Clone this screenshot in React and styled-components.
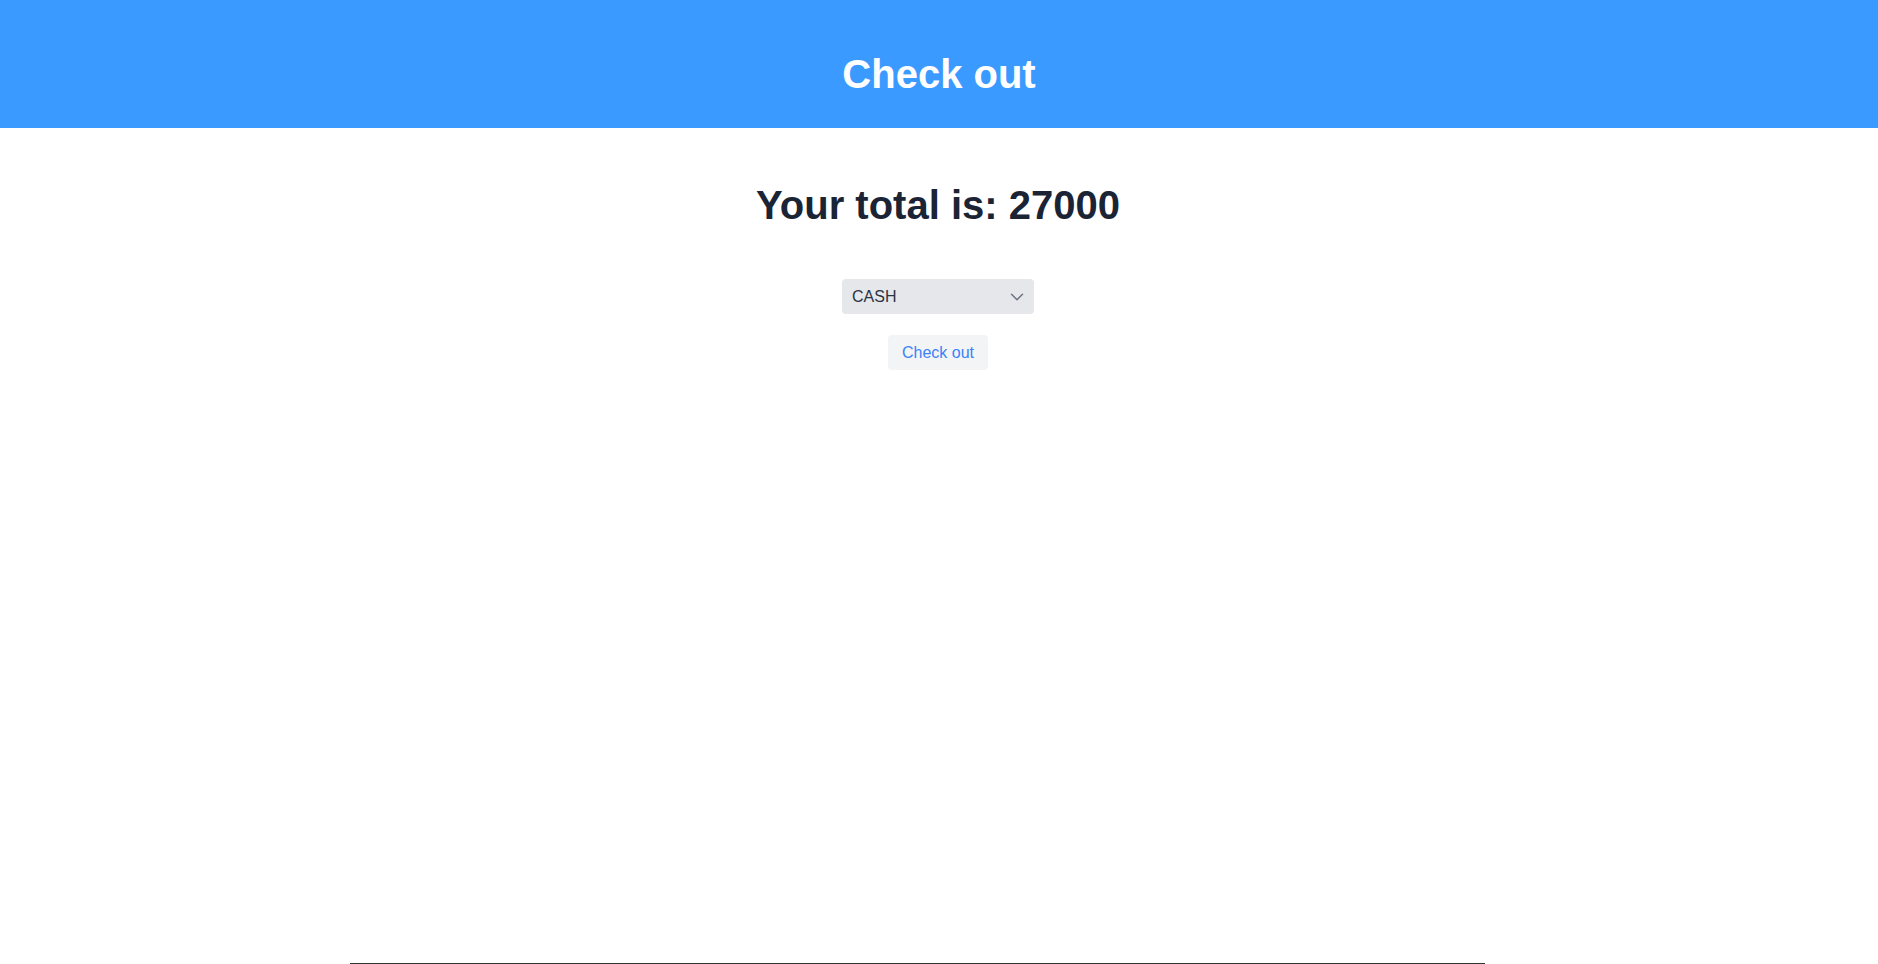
import React, { useState } from 'react';
import styled, { createGlobalStyle } from 'styled-components';
import { ChevronDown } from 'lucide-react';

const GlobalStyle = createGlobalStyle`
	html, body {
		margin: 0;
		padding: 0;
		background: #ffffff;
		font-family: 'Liberation Sans', Arial, sans-serif;
		overflow: hidden;
	}
`;

const App = () => {
	const [method, setMethod] = useState('CASH');
	return (
		<Page>
			<GlobalStyle />
			<Header>
				<HeaderTitle>Check out</HeaderTitle>
			</Header>
			<Main>
				<Total>Your total is: 27000</Total>
				<SelectWrap>
					<Select value={method} onChange={(e) => setMethod(e.target.value)}>
						<option value="CASH">CASH</option>
						<option value="CARD">CARD</option>
					</Select>
					<Chevron>
						<ChevronDown size={22} strokeWidth={1.6} />
					</Chevron>
				</SelectWrap>
				<CheckoutButton type="button">Check out</CheckoutButton>
			</Main>
			<Footer>
				<FooterRule />
			</Footer>
		</Page>
	);
};

export default App;

const Page = styled.div`
	display: flex;
	flex-direction: column;
	width: 100%;
`;

const Header = styled.header`
	height: 128px;
	box-sizing: border-box;
	padding-top: 50px;
	background: #3b9aff;
	display: flex;
	justify-content: center;
`;

const HeaderTitle = styled.h1`
	margin: 0;
	font-size: 40px;
	line-height: 48px;
	font-weight: 700;
	color: #ffffff;
`;

const Main = styled.main`
	height: 835px;
	display: flex;
	flex-direction: column;
	align-items: center;
	padding: 53px 2px 0 0;
	box-sizing: border-box;
`;

const Total = styled.h2`
	margin: 0 0 50px;
	font-size: 40px;
	line-height: 48px;
	font-weight: 700;
	color: #1b2434;
`;

const SelectWrap = styled.div`
	position: relative;
	width: 192px;
	height: 35px;
	margin-bottom: 21px;
`;

const Select = styled.select`
	appearance: none;
	width: 100%;
	height: 100%;
	border: none;
	border-radius: 4px;
	background: #e5e7eb;
	padding: 0 32px 0 10px;
	font-family: 'Liberation Sans', Arial, sans-serif;
	font-size: 16px;
	color: #2a3342;
	outline: none;
`;

const Chevron = styled.span`
	position: absolute;
	right: 6px;
	top: 50%;
	transform: translateY(-50%);
	display: flex;
	color: #6b7280;
	pointer-events: none;
`;

const CheckoutButton = styled.button`
	width: 100px;
	height: 35px;
	border: none;
	border-radius: 4px;
	background: #f3f4f6;
	color: #3b82f6;
	font-family: 'Liberation Sans', Arial, sans-serif;
	font-size: 16px;
	cursor: pointer;
`;

const Footer = styled.footer`
	padding: 0 393px 0 350px;
	height: 40px;
`;

const FooterRule = styled.div`
	border-top: 1px solid #333333;
`;
